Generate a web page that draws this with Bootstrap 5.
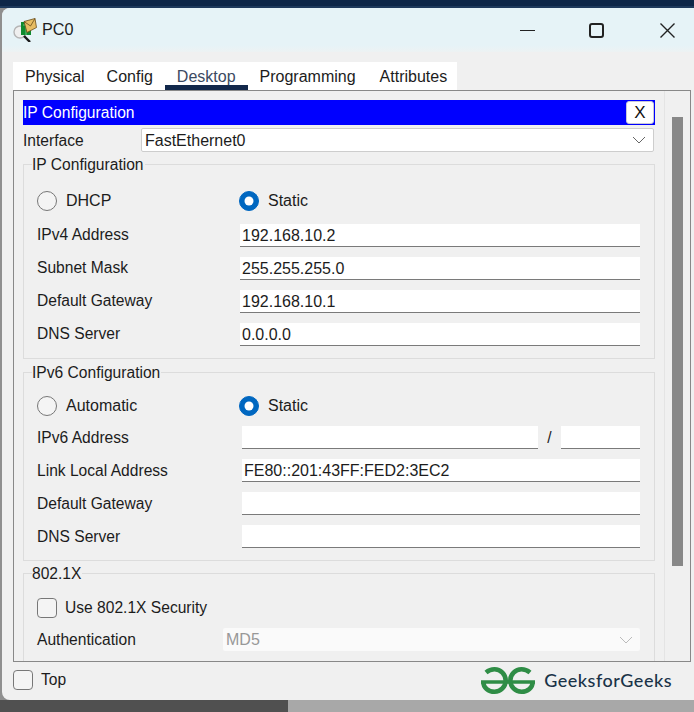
<!DOCTYPE html>
<html lang="en">
<head>
  <title>PC0</title>
  <meta charset="UTF-8">
  <meta name="viewport" content="width=device-width, initial-scale=1">
  <link href="https://cdn.jsdelivr.net/npm/bootstrap@5.3.0/dist/css/bootstrap.min.css" rel="stylesheet">
  <style>
    html, body { height: 712px; overflow: hidden; }
    body { background: #8f8f8f; font-family: "Liberation Sans", Arial, sans-serif; font-size: 15.6px; color: #1c1c1c; }
    .top-strip { height: 8px; background: #0e2748; border-bottom: 2px solid #1e3a5c; }
    .pc-window { height: 692px; margin-left: 2px; background: #f0f0f0; border-radius: 8px 0 0 8px; overflow: hidden; }
    .title-bar { height: 44px; background: linear-gradient(#e6f3f7 85%, #edf2f3); padding-left: 11px; }
    .title-text { font-size: 16.2px; margin-left: 5px; padding-bottom: 2px; }
    .win-btns { margin-left: auto; }
    .win-btn { display: block; }
    .win-btn-min { margin-right: 54px; }
    .win-btn-max { margin-right: 56px; }
    .win-btn-close { margin-right: 19px; }
    .tab-strip { margin: 10px 0 0 11px; width: 444px; height: 28px; background: #fff; flex-wrap: nowrap; }
    .tab-link { padding: 0 12px; height: 28px; line-height: 30px; font-size: 16px; color: #1c1c1c; }
    .tab-link:first-child { padding-right: 10px; }
    .tab-link.is-on { color: #3c4a62; box-shadow: inset 0 -5px 0 #12284b; }
    .main-panel { height: 572px; margin: 0 3px 0 11px; border: 1px solid #888; overflow: hidden; }
    .panel-body { width: 650px; flex: none; padding: 9px 9px 0; }
    .side-track { flex: 1; border-left: 1px solid #e4e4e4; padding: 26px 7px 0; }
    .side-thumb { height: 449px; width: 11px; background: #888; }
    .blue-bar { height: 25px; background: #0000ff; color: #fff; line-height: 25px; padding-right: 1px; }
    .close-x { width: 28px; height: 23px; background: #fff; color: #111; border: 1px solid #c8c8d8; border-radius: 3px; padding: 0; font-size: 17px; line-height: 21px; }
    .iface-row { height: 24px; margin-top: 3px; }
    .iface-label { width: 118px; padding-top: 1px; }
    .plain-select { font-size: 16px; line-height: 20px; color: #1c1c1c; border-radius: 2px; padding: 1px 30px 0 3px; border: 1px solid #cdcdcd; background-color: #fff; background-size: 14px 8px; background-position: right 7px center; background-image: url("data:image/svg+xml,%3csvg xmlns='http://www.w3.org/2000/svg' viewBox='0 0 14 8'%3e%3cpath fill='none' stroke='%23666' d='M1 1l6 6 6-6'/%3e%3c/svg%3e"); }
    .iface-select { width: 513px; height: 24px; }
    .group-box { border: 1px solid #dcdcdc; padding: 0 14px 12px 8px; margin: 2px 0 0; min-width: 0; }
    .group-box.first-box { margin-top: 1px; }
    .group-box.box-dot1x { margin-top: 1px; padding-bottom: 30px; }
    .group-title { float: none; width: auto; font-size: 15.6px; line-height: 20px; margin: 0; padding: 2px 1px 0 0; }
    .opt-row { height: 24px; padding-left: 5px; font-size: 16px; }
    .opt-first { margin-top: 14px; }
    .opt-tight { margin-top: 11px; }
    .opt-one { width: 202px; }
    .round-opt, .square-opt { width: 20px; height: 20px; margin: 0; flex: none; background-color: #f4f4f4; border: 1px solid #777; }
    .square-opt { border-radius: 4px; }
    .round-opt:checked { background-color: #0067c0; border-color: #0067c0; }
    .opt-label { margin-left: 9px; }
    .field-row { height: 23px; margin-top: 10px; padding-left: 5px; }
    .field-row.first-field { margin-top: 11px; }
    .box-six .field-row.first-field { margin-top: 8px; }
    .field-label { width: 203px; flex: none; padding-bottom: 2px; }
    .box-six .field-label { width: 205px; padding-bottom: 0; }
    .line-input { height: 23px; border: 0; border-bottom: 1px solid #7a7a7a; border-radius: 0; padding: 1px 2px 0; font-size: 16px; line-height: 20px; color: #1c1c1c; background: #fff; }
    .input-main { width: 400px; }
    .box-six .input-main { width: 398px; }
    .input-six { width: 296px; }
    .input-prefix { width: 79px; }
    .slash-mark { width: 23px; text-align: center; }
    .dot1x-first { margin-top: 12px; }
    .dot1x-opt { font-size: 15.6px; }
    .dot1x-opt .opt-label { margin-left: 8px; }
    .box-dot1x .field-row.first-field { margin-top: 8px; }
    .dot1x-label { width: 186px; flex: none; }
    .muted-select { width: 417px; height: 23px; border: 0; color: #989898; background-color: #fafafa; opacity: 1; background-image: url("data:image/svg+xml,%3csvg xmlns='http://www.w3.org/2000/svg' viewBox='0 0 14 8'%3e%3cpath fill='none' stroke='%23bbb' d='M1 1l6 6 6-6'/%3e%3c/svg%3e"); }
    .muted-select:disabled { background-color: #fafafa; color: #989898; }
    .foot-bar { height: 38px; padding: 0 22px 3px 11px; }
    .foot-label { margin-left: 8px; }
    .gfg-text { font-family: "Lato", "Liberation Sans", sans-serif; font-size: 18px; font-weight: 500; color: #1a3348; margin-left: 9px; letter-spacing: .5px; }
    .gfg-group { margin-top: 1px; }
    .bottom-strip { height: 12px; }
    .strip-dark { width: 288px; background: #505050; }
    .strip-light { background: #a8a8a8; }
  </style>
</head>
<body>

<div class="top-strip"></div>

<div class="pc-window">
  <div class="title-bar d-flex align-items-center">
    <svg width="24" height="24" viewBox="0 0 24 24">
      <circle cx="7" cy="14" r="6" fill="#efefef" stroke="#b5b5b5" stroke-width="1.4"/>
      <path d="M11 18l6 6" stroke="#1a1a1a" stroke-width="2.4"/>
      <rect x="8" y="4" width="10" height="13" fill="#0f8a2e"/>
      <path d="M10 7h7M13 4v13" stroke="#7fd08f" stroke-width=".8"/>
      <path d="M11 3.500l11-3 1.500 9-9.500 5z" fill="#e7bd63" stroke="#6a4c1a" stroke-width=".8"/>
      <path d="M11 3.500l6.500 4.500 4.500-7.500" fill="none" stroke="#6a4c1a" stroke-width=".8"/>
    </svg>
    <span class="title-text">PC0</span>
    <div class="win-btns d-flex align-items-center">
      <svg class="win-btn win-btn-min" width="15" height="15" viewBox="0 0 15 15"><path d="M0 7.500h15" stroke="#222"/></svg>
      <svg class="win-btn win-btn-max" width="15" height="15" viewBox="0 0 15 15"><rect x="1" y="1" width="13" height="13" rx="2" fill="none" stroke="#222" stroke-width="2"/></svg>
      <svg class="win-btn win-btn-close" width="15" height="15" viewBox="0 0 15 15"><path d="M.5.5l14 14M14.500.5l-14 14" stroke="#222" stroke-width="1.400"/></svg>
    </div>
  </div>

  <nav class="nav tab-strip">
    <a class="nav-link tab-link" href="#">Physical</a>
    <a class="nav-link tab-link" href="#">Config</a>
    <a class="nav-link tab-link is-on" href="#">Desktop</a>
    <a class="nav-link tab-link" href="#">Programming</a>
    <a class="nav-link tab-link" href="#">Attributes</a>
  </nav>

  <div class="main-panel d-flex">
    <div class="panel-body">
      <div class="blue-bar d-flex justify-content-between align-items-center">
        <span>IP Configuration</span>
        <button class="close-x" type="button">X</button>
      </div>

      <div class="iface-row d-flex align-items-center">
        <span class="iface-label">Interface</span>
        <select class="form-select plain-select iface-select"><option>FastEthernet0</option></select>
      </div>

      <fieldset class="group-box first-box">
        <legend class="group-title">IP Configuration</legend>
        <div class="opt-row opt-first d-flex align-items-center">
          <div class="opt-one d-flex align-items-center"><input class="form-check-input round-opt" type="radio" name="v4"><span class="opt-label">DHCP</span></div>
          <div class="d-flex align-items-center"><input class="form-check-input round-opt" type="radio" name="v4" checked><span class="opt-label">Static</span></div>
        </div>
        <div class="field-row first-field d-flex align-items-center"><span class="field-label">IPv4 Address</span><input class="form-control line-input input-main" value="192.168.10.2"></div>
        <div class="field-row d-flex align-items-center"><span class="field-label">Subnet Mask</span><input class="form-control line-input input-main" value="255.255.255.0"></div>
        <div class="field-row d-flex align-items-center"><span class="field-label">Default Gateway</span><input class="form-control line-input input-main" value="192.168.10.1"></div>
        <div class="field-row d-flex align-items-center"><span class="field-label">DNS Server</span><input class="form-control line-input input-main" value="0.0.0.0"></div>
      </fieldset>

      <fieldset class="group-box box-six">
        <legend class="group-title">IPv6 Configuration</legend>
        <div class="opt-row opt-tight d-flex align-items-center">
          <div class="opt-one d-flex align-items-center"><input class="form-check-input round-opt" type="radio" name="v6"><span class="opt-label">Automatic</span></div>
          <div class="d-flex align-items-center"><input class="form-check-input round-opt" type="radio" name="v6" checked><span class="opt-label">Static</span></div>
        </div>
        <div class="field-row first-field d-flex align-items-center"><span class="field-label">IPv6 Address</span><input class="form-control line-input input-six"><span class="slash-mark">/</span><input class="form-control line-input input-prefix"></div>
        <div class="field-row d-flex align-items-center"><span class="field-label">Link Local Address</span><input class="form-control line-input input-main" value="FE80::201:43FF:FED2:3EC2"></div>
        <div class="field-row d-flex align-items-center"><span class="field-label">Default Gateway</span><input class="form-control line-input input-main"></div>
        <div class="field-row d-flex align-items-center"><span class="field-label">DNS Server</span><input class="form-control line-input input-main"></div>
      </fieldset>

      <fieldset class="group-box box-dot1x">
        <legend class="group-title">802.1X</legend>
        <div class="opt-row dot1x-first dot1x-opt d-flex align-items-center"><input class="form-check-input square-opt" type="checkbox"><span class="opt-label">Use 802.1X Security</span></div>
        <div class="field-row first-field d-flex align-items-center">
          <span class="dot1x-label">Authentication</span>
          <select class="form-select plain-select muted-select" disabled><option>MD5</option></select>
        </div>
      </fieldset>
    </div>
    <div class="side-track"><div class="side-thumb"></div></div>
  </div>

  <div class="foot-bar d-flex align-items-center">
    <input class="form-check-input square-opt" type="checkbox">
    <span class="foot-label">Top</span>
    <div class="ms-auto gfg-group d-flex align-items-center">
      <svg width="54" height="27" viewBox="0 0 54 27">
        <g fill="none" stroke="#2f8d46">
          <path d="M0 15h54" stroke-width="3.600"/>
          <path d="M5 5.500C7.500 3.400 10.500 2.300 13.500 2.300c6.200 0 11.200 5 11.200 11.200s-5 11.200-11.200 11.200S2.300 20.500 2.300 15" stroke-width="4.600"/>
          <path d="M49 5.500C46.500 3.400 43.500 2.300 40.500 2.300c-6.200 0-11.200 5-11.200 11.200s5 11.200 11.200 11.200 11.200-4.200 11.200-9.700" stroke-width="4.600"/>
        </g>
      </svg>
      <span class="gfg-text">GeeksforGeeks</span>
    </div>
  </div>
</div>

<div class="bottom-strip d-flex">
  <div class="strip-dark"></div>
  <div class="strip-light flex-grow-1"></div>
</div>

</body>
</html>
